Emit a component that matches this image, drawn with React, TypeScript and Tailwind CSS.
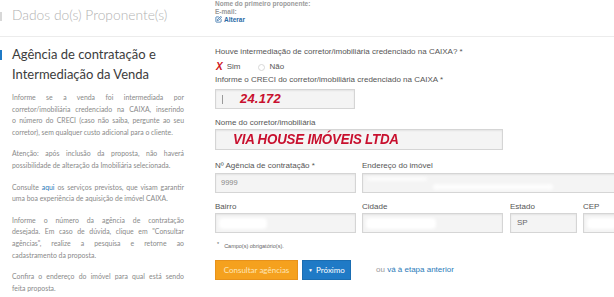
import React from "react";

const futura = { fontFamily: "Lato, 'Open Sans', sans-serif" };
const arial = { fontFamily: "'Liberation Sans', Arial, sans-serif" };

function Box({ className = "", children }: { className?: string; children?: React.ReactNode }) {
  return (
    <div
      className={
        "relative h-[20px] border border-[#d5d5d5] bg-[#f4f4f4] shadow-[inset_0_1px_2px_rgba(0,0,0,0.07)] flex items-center overflow-hidden " +
        className
      }
    >
      {children}
    </div>
  );
}

function Label({ children, className = "" }: { children: React.ReactNode; className?: string }) {
  return (
    <div className={"h-[12px] leading-[12px] text-[8px] text-[#555] whitespace-nowrap " + className} style={arial}>
      {children}
    </div>
  );
}

function Blob({ className }: { className: string }) {
  return <div className={"absolute bg-white blur-[1.5px] rounded-sm " + className} />;
}

function Para({ lines, last = false }: { lines: React.ReactNode[]; last?: boolean }) {
  return (
    <div className={last ? "" : "mb-[10px]"}>
      {lines.map((l, i) => (
        <div
          key={i}
          className={
            "whitespace-nowrap " + (i < lines.length - 1 ? "text-justify [text-align-last:justify]" : "")
          }
        >
          {l}
        </div>
      ))}
    </div>
  );
}

export default function App() {
  return (
    <div className="w-[614px] h-[297px] overflow-hidden bg-white relative">
      {/* top section */}
      <div className="h-[37px] border-b border-[#ececec] flex relative">
        <div className="absolute left-0 top-[12px] w-[2px] h-[9px] bg-[#d8d8d8]" />
        <div className="w-[215px] shrink-0 pl-[12px] pt-[5px]">
          <div className="text-[13.8px] leading-[20px] text-[#b2b2b2] font-light whitespace-nowrap" style={futura}>
            Dados do(s) Proponente(s)
          </div>
        </div>
        <div className="pt-[0px] text-[6.5px] leading-[7.5px] text-[#9a9a9a] font-bold" style={arial}>
          <div>Nome do primeiro proponente:</div>
          <div>E-mail:</div>
          <div className="flex items-center gap-[2px] text-[#2a6aa6] mt-[0.5px]">
            <svg width="7" height="7" viewBox="0 0 24 24" fill="none" stroke="#2a6aa6" strokeWidth="2.6" strokeLinecap="round" strokeLinejoin="round">
              <path d="M12 3H5a2 2 0 0 0-2 2v14a2 2 0 0 0 2 2h14a2 2 0 0 0 2-2v-7" />
              <path d="M18.4 2.6a2.1 2.1 0 0 1 3 3L12 15l-4 1 1-4Z" />
            </svg>
            <span>Alterar</span>
          </div>
        </div>
      </div>

      {/* body */}
      <div className="flex relative">
        <div className="absolute left-0 top-[13px] w-[2px] h-[10px] bg-[#1f7ac6]" />
        {/* left column */}
        <div className="w-[215px] shrink-0 pl-[12px] pr-[31px] pt-[7px]" style={futura}>
          <div className="text-[13px] leading-[20px] text-[#3c3c3c] whitespace-nowrap">
            <div>Agência de contratação e</div>
            <div>Intermediação da Venda</div>
          </div>
          <div className="mt-[8px] text-[6.9px] leading-[11.6px] text-[#8a8a8a]">
            <Para
              lines={[
                "Informe se a venda foi intermediada por",
                "corretor/imobiliária credenciado na CAIXA, inserindo",
                "o número do CRECI (caso não saiba, pergunte ao seu",
                "corretor), sem qualquer custo adicional para o cliente.",
              ]}
            />
            <Para
              lines={[
                "Atenção: após inclusão da proposta, não haverá",
                "possibilidade de alteração da Imobiliária selecionada.",
              ]}
            />
            <Para
              lines={[
                <>
                  Consulte <span className="text-[#2b7bb9]">aqui</span> os serviços previstos, que visam garantir
                </>,
                "uma boa experiência de aquisição de imóvel CAIXA.",
              ]}
            />
            <Para
              lines={[
                "Informe o número da agência de contratação",
                "desejada. Em caso de dúvida, clique em \"Consultar",
                "agências\", realize a pesquisa e retorne ao",
                "cadastramento da proposta.",
              ]}
            />
            <Para
              last
              lines={["Confira o endereço do imóvel para qual está sendo", "feita proposta."]}
            />
          </div>
        </div>

        {/* right column */}
        <div className="pt-[9px] flex flex-col" style={arial}>
          <Label>Houve intermediação de corretor/imobiliária credenciado na CAIXA? *</Label>
          <div className="mt-[3px] h-[12px] flex items-center text-[8px] text-[#555]">
            <span className="ml-[1px] text-[10px] font-bold italic text-[#d0141e] leading-none">X</span>
            <span className="ml-[4px]">Sim</span>
            <span className="ml-[18px] w-[7px] h-[7px] rounded-full border border-[#d8d8d8] bg-white" />
            <span className="ml-[4px]">Não</span>
          </div>
          <Label className="mt-[1px]">Informe o CRECI do corretor/imobiliária credenciado na CAIXA *</Label>
          <Box className="mt-[3px] w-[140px]">
            <span className="ml-[6px] w-[1px] h-[9px] bg-[#9a9a9a]" />
            <span className="ml-[17px] text-[13px] font-bold italic text-[#c8102e] tracking-[0.2px]">24.172</span>
          </Box>
          <Label className="mt-[8px]">Nome do corretor/imobiliária</Label>
          <Box className="w-[288px] h-[21px]">
            <span className="ml-[17px] text-[14px] font-bold italic text-[#c8102e] whitespace-nowrap tracking-[-0.2px] scale-x-[0.95] origin-left inline-block">
              VIA HOUSE IMÓVEIS LTDA
            </span>
          </Box>

          <div className="mt-[10px] flex gap-[6px]">
            <div className="w-[141px]">
              <Label>Nº Agência de contratação *</Label>
              <Box className="mt-[1px]">
                <span className="ml-[5px] text-[7.5px] text-[#888]">9999</span>
              </Box>
            </div>
            <div className="w-[436px]">
              <Label>Endereço do imóvel</Label>
              <Box className="mt-[1px]">
                <Blob className="left-[4px] top-[3px] w-[60px] h-[4px] opacity-70" />
                <Blob className="left-[70px] top-[10px] w-[120px] h-[6px] opacity-80" />
              </Box>
            </div>
          </div>

          <div className="mt-[8px] flex gap-[6px]">
            <div className="w-[141px]">
              <Label>Bairro</Label>
              <Box>
                <Blob className="left-[3px] top-[4px] w-[48px] h-[11px]" />
              </Box>
            </div>
            <div className="w-[141px]">
              <Label>Cidade</Label>
              <Box>
                <Blob className="left-[3px] top-[4px] w-[70px] h-[11px]" />
              </Box>
            </div>
            <div className="w-[67px] ml-[1px]">
              <Label>Estado</Label>
              <Box>
                <span className="ml-[6px] text-[8px] text-[#666]">SP</span>
              </Box>
            </div>
            <div className="w-[67px]">
              <Label>CEP</Label>
              <Box>
                <Blob className="left-[3px] top-[4px] w-[30px] h-[11px]" />
              </Box>
            </div>
          </div>

          <div className="mt-[8px] h-[10px] flex items-start text-[5.5px] text-[#666] leading-[10px]">
            <span className="ml-[2px] -mt-[2px]">*</span>
            <span className="ml-[5px]">Campo(s) obrigatório(s).</span>
          </div>

          <div className="mt-[9px] flex items-center">
            <div
              className="w-[83px] h-[20px] bg-[#f5a11e] border border-[#e8921a] flex items-center justify-center text-[8px] text-[#fde6b8]"
              style={futura}
            >
              Consultar agências
            </div>
            <div
              className="ml-[4px] w-[49px] h-[20px] bg-[#1f7ac6] border border-[#1a6db2] flex items-center justify-center gap-[3px] text-[8px] text-white"
              style={futura}
            >
              <span className="text-[5px] leading-none">▼</span>
              <span>Próximo</span>
            </div>
            <div className="ml-[25px] text-[8px] text-[#999] whitespace-nowrap">
              ou <span className="text-[#2b7bb9]">vá à etapa anterior</span>
            </div>
          </div>
        </div>
      </div>
    </div>
  );
}
